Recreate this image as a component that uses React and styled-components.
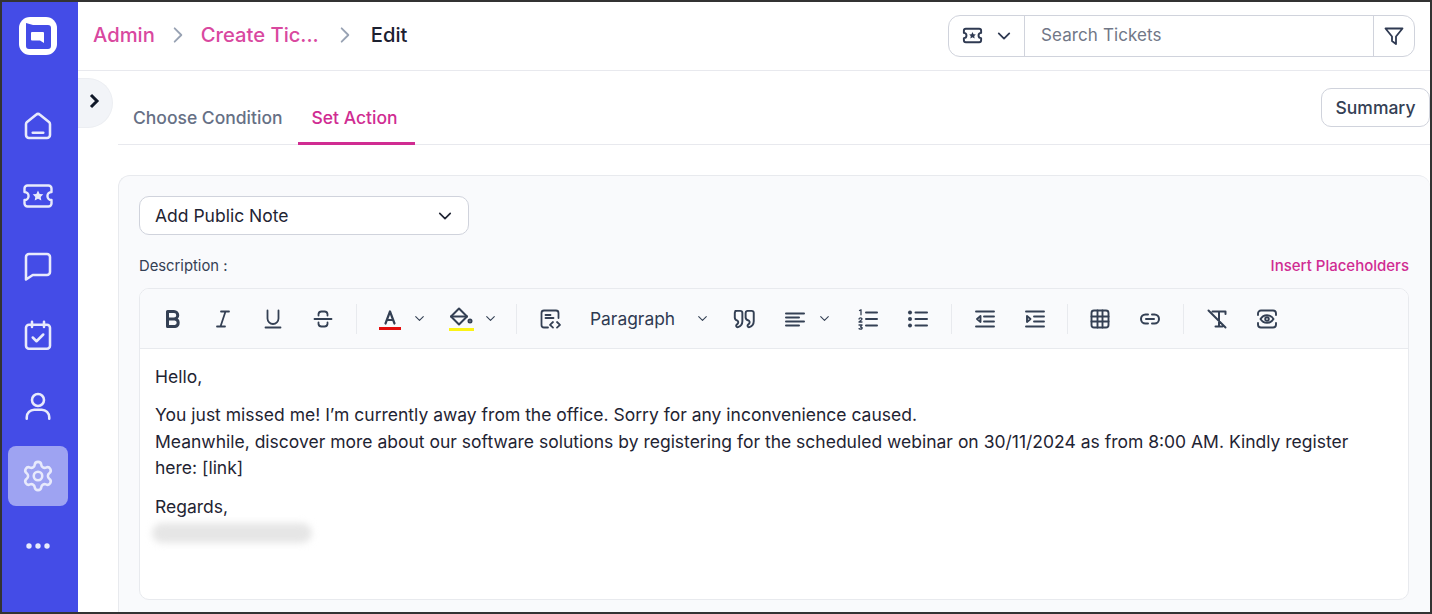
import styled, { createGlobalStyle } from "styled-components";
import { Settings } from "lucide-react";

const GlobalStyle = createGlobalStyle`
  html, body {
    margin: 0;
    padding: 0;
    background: #fff;
  }
  * {
    box-sizing: border-box;
  }
  body {
    font-family: Inter, "Noto Sans", "Liberation Sans", sans-serif;
    color: #1f2433;
  }
`;

const Frame = styled.div`
  width: 1432px;
  height: 614px;
  display: flex;
  overflow: hidden;
  border: 2px solid #333;
  background: #fff;
`;

const Sidebar = styled.nav`
  width: 76px;
  flex: none;
  background: #444ce7;
  display: flex;
  flex-direction: column;
  align-items: center;
  padding: 14px 4px 0 0;
`;

const Logo = styled.svg`
  width: 40px;
  height: 40px;
  margin-bottom: 40px;
`;

const NavItem = styled.div`
  width: 60px;
  height: 60px;
  margin-bottom: 10px;
  border-radius: 8px;
  display: flex;
  align-items: center;
  justify-content: center;
  color: #e8eafc;
  background: ${(p) => (p.$active ? "#9ea3f2" : "transparent")};
`;

const Main = styled.div`
  flex: 1;
  min-width: 0;
  position: relative;
  display: flex;
  flex-direction: column;
`;

const Header = styled.header`
  height: 69px;
  flex: none;
  display: flex;
  align-items: center;
  justify-content: space-between;
  padding: 0 15px;
  border-bottom: 1px solid #e8e9ee;
`;

const Crumbs = styled.div`
  display: flex;
  align-items: center;
  font-size: 20.2px;
  margin-top: -3px;
`;

const Crumb = styled.span`
  color: ${(p) => (p.$current ? "#1c2130" : "#d9489f")};
  font-weight: 500;
`;

const CrumbArrow = styled.svg`
  width: 20px;
  height: 20px;
  margin: 0 ${(p) => p.$space || 13}px;
  color: #98a2b3;
`;

const SearchBar = styled.div`
  width: 467px;
  height: 42px;
  margin-top: -1px;
  display: flex;
  align-items: stretch;
  border: 1px solid #d0d3dc;
  border-radius: 12px;
`;

const SearchType = styled.div`
  width: 76px;
  display: flex;
  align-items: center;
  justify-content: center;
  gap: 11px;
  color: #2f3a52;
  border-right: 1px solid #d0d3dc;
`;

const SearchInput = styled.div`
  flex: 1;
  display: flex;
  align-items: center;
  padding-left: 16px;
  padding-bottom: 1px;
  font-size: 17px;
  color: #717787;
  letter-spacing: 0.1px;
`;

const FilterBox = styled.div`
  width: 41px;
  display: flex;
  align-items: center;
  justify-content: center;
  color: #2f3a52;
  border-left: 1px solid #d0d3dc;
`;

const Collapse = styled.div`
  position: absolute;
  left: 0;
  top: 76px;
  width: 35px;
  height: 50px;
  border-radius: 0 25px 25px 0;
  background: #f2f4f8;
  border: 1px solid #eceef2;
  border-left: none;
  display: flex;
  align-items: center;
  padding: 0 0 4px 10px;
  color: #101828;
`;

const TabRow = styled.div`
  height: 74px;
  flex: none;
  margin-left: 40px;
  display: flex;
  justify-content: space-between;
  border-bottom: 1px solid #e8e9ee;
`;

const Tabs = styled.div`
  display: flex;
  align-items: flex-end;
`;

const Tab = styled.div`
  height: 56px;
  margin-bottom: -1px;
  padding: 18px ${(p) => (p.$active ? 17 : 15)}px 0 ${(p) => (p.$active ? 14 : 15)}px;
  font-size: 17.5px;
  font-weight: 500;
  color: ${(p) => (p.$active ? "#d02c92" : "#667085")};
  border-bottom: 3px solid ${(p) => (p.$active ? "#d02c92" : "transparent")};
`;

const SummaryButton = styled.div`
  width: 109px;
  height: 39px;
  margin-top: 17px;
  display: flex;
  align-items: center;
  justify-content: center;
  font-size: 17.5px;
  font-weight: 500;
  color: #344054;
  background: #fff;
  border: 1px solid #d0d3dc;
  border-radius: 10px;
`;

const Card = styled.section`
  flex: 1;
  margin: 30px 0 0 40px;
  padding: 20px 21px 0 20px;
  background: #f9fafc;
  border: 1px solid #e8eaee;
  border-bottom: none;
  border-right: none;
  border-radius: 12px 12px 0 0;
  min-height: 0;
`;

const Select = styled.div`
  width: 330px;
  height: 39px;
  display: flex;
  align-items: center;
  justify-content: space-between;
  padding: 0 14px 0 15px;
  font-size: 17.5px;
  color: #1f2433;
  background: #fff;
  border: 1px solid #d0d3dc;
  border-radius: 10px;
`;

const LabelRow = styled.div`
  height: 53px;
  display: flex;
  align-items: center;
  justify-content: space-between;
  padding-top: 8px;
  font-size: 14.8px;
  color: #344054;
`;

const PlaceholderLink = styled.span`
  font-size: 15px;
  font-weight: 500;
  color: #d02c92;
`;

const Editor = styled.div`
  height: 312px;
  display: flex;
  flex-direction: column;
  border: 1px solid #e8eaee;
  border-radius: 10px;
  overflow: hidden;
  background: #fff;
`;

const Toolbar = styled.div`
  height: 60px;
  flex: none;
  display: flex;
  align-items: center;
  padding-left: 8px;
  background: #f9fafc;
  border-bottom: 1px solid #e8eaee;
  color: #344054;
`;

const ToolButton = styled.div`
  width: 50px;
  height: 30px;
  flex: none;
  margin-left: ${(p) => p.$offset || 0}px;
  display: flex;
  align-items: center;
  justify-content: center;
`;

const Caret = styled.div`
  width: 20px;
  height: 20px;
  flex: none;
  margin-left: -6px;
  margin-right: ${(p) => p.$after || 0}px;
  display: flex;
  align-items: center;
  justify-content: center;
`;

const Separator = styled.div`
  width: 1px;
  height: 30px;
  flex: none;
  margin: 0 ${(p) => p.$space || 8}px;
  background: #e8eaee;
`;

const FormatName = styled.span`
  width: 108px;
  flex: none;
  margin-left: 15px;
  font-size: 17.4px;
  color: #2f3a52;
`;

const Body = styled.div`
  flex: 1;
  padding: 14.5px 30px 15px 15px;
  font-size: 17.5px;
  line-height: 26.5px;
  color: #1f2433;
`;

const Para = styled.p`
  margin: 0 0 ${(p) => (p.$last ? 0 : 12)}px;
`;

const BlurredName = styled.div`
  width: 160px;
  height: 20px;
  margin: 3px 0 0 -3px;
  border-radius: 10px;
  background: #e6e6e6;
  filter: blur(3.5px);
`;

const Chevron = ({ size = 14, width = 2 }) => (
  <svg width={size} height={size} viewBox="0 0 24 24" fill="none" stroke="currentColor" strokeWidth={width} strokeLinecap="round" strokeLinejoin="round">
    <path d="M5 8.5l7 7 7-7" />
  </svg>
);

const Icon = ({ size = 24, sw = 2, children }) => (
  <svg width={size} height={size} viewBox="0 0 24 24" fill="none" stroke="currentColor" strokeWidth={sw} strokeLinecap="round" strokeLinejoin="round">
    {children}
  </svg>
);

const TICKET = "M5 5h14a2 2 0 0 1 2 2v2.3a2.7 2.7 0 0 0 0 5.4V17a2 2 0 0 1-2 2H5a2 2 0 0 1-2-2v-2.3a2.7 2.7 0 0 0 0-5.4V7a2 2 0 0 1 2-2z";
const STAR = "M12 8.4l1.1 2.2 2.4.3-1.7 1.7.4 2.4-2.2-1.1-2.2 1.1.4-2.4-1.7-1.7 2.4-.3z";

const navIcons = [
  <Icon size={36} sw={1.7} key="home">
    <path d="M4 10.8c0-.6.3-1.1.7-1.5l6-4.8a2 2 0 0 1 2.6 0l6 4.8c.4.4.7.9.7 1.5V18a2 2 0 0 1-2 2H6a2 2 0 0 1-2-2z" />
    <path d="M8.5 16.5h7" />
  </Icon>,
  <Icon size={36} sw={1.6} key="ticket">
    <path d={TICKET} />
    <path d={STAR} fill="currentColor" stroke="none" />
  </Icon>,
  <Icon size={36} sw={1.7} key="chat">
    <path d="M6 4h12a2 2 0 0 1 2 2v10a2 2 0 0 1-2 2H8.5L4 21V6a2 2 0 0 1 2-2z" />
  </Icon>,
  <Icon size={36} sw={1.7} key="calendar">
    <rect x="4" y="4.5" width="16" height="16" rx="2" />
    <path d="M8 2.5v3.5M16 2.5v3.5M8.5 13l2.5 2.500 4.500-4.500" />
  </Icon>,
  <Icon size={36} sw={1.7} key="person">
    <circle cx="12" cy="8" r="4" />
    <path d="M4.5 20.5v-1a5 5 0 0 1 5-5h5a5 5 0 0 1 5 5v1" />
  </Icon>,
  <Settings size={34} strokeWidth={1.8} key="settings" />,
  <Icon size={36} sw={0} key="more">
    <g fill="currentColor">
      <circle cx="6" cy="12" r="1.8" />
      <circle cx="12" cy="12" r="1.8" />
      <circle cx="18" cy="12" r="1.8" />
    </g>
  </Icon>,
];

const App = () => {
  return (
    <>
      <GlobalStyle />
      <Frame>
        <Sidebar>
          <Logo viewBox="0 0 40 40">
            <rect x="1" y="1" width="38" height="38" rx="11" fill="#fff" />
            <path d="M8 7 15 9h15a3 3 0 0 1 3 3v18a3 3 0 0 1-3 3H11a3 3 0 0 1-3-3z" fill="#444ce7" />
            <path d="M14 16h11a1 1 0 0 1 1 1v10l-4-2.500h-8a1 1 0 0 1-1-1v-6.500a1 1 0 0 1 1-1z" fill="#fff" />
          </Logo>
          {navIcons.map((icon, i) => (
            <NavItem key={i} $active={i === 5}>
              {icon}
            </NavItem>
          ))}
        </Sidebar>
        <Main>
          <Header>
            <Crumbs>
              <Crumb>Admin</Crumb>
              <CrumbArrow viewBox="0 0 24 24" fill="none" stroke="currentColor" strokeWidth="2.2" strokeLinecap="round" strokeLinejoin="round">
                <path d="M8 4l8 8-8 8" />
              </CrumbArrow>
              <Crumb>Create Tic...</Crumb>
              <CrumbArrow $space={16} viewBox="0 0 24 24" fill="none" stroke="currentColor" strokeWidth="2.2" strokeLinecap="round" strokeLinejoin="round">
                <path d="M8 4l8 8-8 8" />
              </CrumbArrow>
              <Crumb $current>Edit</Crumb>
            </Crumbs>
            <SearchBar>
              <SearchType>
                <Icon size={23} sw={2}>
                  <path d={TICKET} />
                  <path d={STAR} fill="currentColor" stroke="none" />
                </Icon>
                <Chevron size={18} width={2.4} />
              </SearchType>
              <SearchInput>Search Tickets</SearchInput>
              <FilterBox>
                <Icon size={24} sw={1.8}>
                  <path d="M3.5 4.5h17l-6.5 8v7.5l-4-3v-4.5z" />
                </Icon>
              </FilterBox>
            </SearchBar>
          </Header>
          <Collapse>
            <svg width="14" height="16" viewBox="0 0 14 16" fill="none" stroke="currentColor" strokeWidth="3" strokeLinejoin="miter">
              <path d="M3 2l6 6-6 6" />
            </svg>
          </Collapse>
          <TabRow>
            <Tabs>
              <Tab>Choose Condition</Tab>
              <Tab $active>Set Action</Tab>
            </Tabs>
            <SummaryButton>Summary</SummaryButton>
          </TabRow>
          <Card>
            <Select>
              Add Public Note
              <Chevron size={18} width={2.2} />
            </Select>
            <LabelRow>
              <span>Description :</span>
              <PlaceholderLink>Insert Placeholders</PlaceholderLink>
            </LabelRow>
            <Editor>
              <Toolbar>
                <ToolButton>
                  <Icon sw={3}>
                    <path d="M6.5 4.5h6.5a3.7 3.7 0 0 1 0 7.5H6.5zM6.5 12h7.5a3.8 3.8 0 0 1 0 7.5H6.5z" />
                  </Icon>
                </ToolButton>
                <ToolButton>
                  <Icon sw={1.8}>
                    <path d="M10 4.5h8M6 19.5h8M14.5 4.5l-5 15" />
                  </Icon>
                </ToolButton>
                <ToolButton>
                  <Icon sw={1.8}>
                    <path d="M6.5 3.5v8a5.5 5.5 0 0 0 11 0v-8M4.5 20.5h15" />
                  </Icon>
                </ToolButton>
                <ToolButton>
                  <Icon sw={1.8}>
                    <path d="M3.5 12h17M16.5 8.5V7a3 3 0 0 0-3-2.5h-3A3 3 0 0 0 7.5 7v1.5M7.5 15.5V17a3 3 0 0 0 3 2.5h3a3 3 0 0 0 3-2.5v-1.5" />
                  </Icon>
                </ToolButton>
                <Separator />
                <ToolButton>
                  <Icon sw={2.2}>
                    <path d="M7.5 16.5 12 4.5l4.5 12M9 13h6" />
                    <rect x="1" y="20" width="22" height="3" fill="#e30d0d" stroke="none" />
                  </Icon>
                </ToolButton>
                <Caret>
                  <Chevron size={13} />
                </Caret>
                <ToolButton $offset={7}>
                  <svg width="26" height="26" viewBox="0 0 26 26" fill="none" stroke="currentColor" strokeWidth="2" strokeLinejoin="round" strokeLinecap="round">
                    <path d="M11 2.5l8 8-8 8-8-8z" />
                    <path d="M3 10.5h16" />
                    <circle cx="22" cy="15" r="1.5" />
                    <rect x="1" y="22" width="25" height="3" fill="#fbf315" stroke="none" />
                  </svg>
                </ToolButton>
                <Caret $after={8}>
                  <Chevron size={13} />
                </Caret>
                <Separator />
                <ToolButton>
                  <Icon sw={1.8}>
                    <path d="M20.5 11V6a2.5 2.5 0 0 0-2.5-2.5H6A2.5 2.5 0 0 0 3.5 6v12A2.5 2.5 0 0 0 6 20.5h4M7.5 8h5M7.5 11h8M15 15l-3 2.8 3 2.8M19 15l3 2.8-3 2.8" />
                  </Icon>
                </ToolButton>
                <FormatName>Paragraph</FormatName>
                <Caret $after={7}>
                  <Chevron size={13} />
                </Caret>
                <ToolButton>
                  <Icon size={26} sw={1.8}>
                    <path d="M4 4.5h4.5a2 2 0 0 1 2 2v7.5a6 6 0 0 1-4 5.5c-1.500.3-2.500-1.500-1-2.500 1.500-1 1.500-2.500.5-3.500-1.500-.5-2.500-1-2.500-3V6.500a2 2 0 0 1 2-2z" />
                    <path d="M15 4.5h4a2 2 0 0 1 2 2v7.500a6 6 0 0 1-4 5.500c-1.500.3-2.500-1.500-1-2.500 1.500-1 1.500-2.500.5-3.500-1.500-.5-3-1-3-3V6.500a2 2 0 0 1 1.500-2z" />
                  </Icon>
                </ToolButton>
                <ToolButton $offset={1}>
                  <Icon sw={2}>
                    <path d="M3 6.5h18M3 10.5h13M3 14.5h18M3 18.5h13" />
                  </Icon>
                </ToolButton>
                <Caret $after={9}>
                  <Chevron size={13} />
                </Caret>
                <ToolButton>
                  <Icon sw={2}>
                    <path d="M10 5.5h11M10 12h11M10 18.5h11" />
                    <path d="M3.5 3.5 5 2.8v5M3 12c.3-1.500 3-1.500 3 0 0 1-2 2-3 3h3M3 18h3l-1.500 2c1.500 0 2 .8 1.500 1.500-.5.7-2 .7-3 .2" strokeWidth="1.3" />
                  </Icon>
                </ToolButton>
                <ToolButton>
                  <Icon sw={2}>
                    <path d="M9.5 5.5h11.5M9.5 12h11.5M9.500 18.500h11.500" />
                    <g fill="currentColor" stroke="none">
                      <circle cx="4" cy="5.5" r="2" />
                      <circle cx="4" cy="12" r="2" />
                      <circle cx="4" cy="18.5" r="2" />
                    </g>
                  </Icon>
                </ToolButton>
                <Separator />
                <ToolButton>
                  <Icon sw={1.9}>
                    <path d="M3 4.5h18M11 9.5h10M11 14.5h10M3 19.5h18M7.5 9l-3.5 3 3.5 3z" />
                  </Icon>
                </ToolButton>
                <ToolButton>
                  <Icon sw={1.9}>
                    <path d="M3 4.5h18M11 9.5h10M11 14.5h10M3 19.5h18M4 9l3.5 3-3.5 3z" />
                  </Icon>
                </ToolButton>
                <Separator $space={7} />
                <ToolButton>
                  <Icon sw={1.9}>
                    <rect x="3.5" y="3.5" width="17" height="17" rx="2.5" />
                    <path d="M3.5 9.5h17M3.5 14.5h17M9.5 3.5v17M14.5 3.5v17" />
                  </Icon>
                </ToolButton>
                <ToolButton>
                  <Icon sw={2}>
                    <path d="M10 7.5H7.5a4.5 4.5 0 0 0 0 9H10M14 7.5h2.5a4.5 4.5 0 0 1 0 9H14M8 12h8" />
                  </Icon>
                </ToolButton>
                <Separator />
                <ToolButton>
                  <Icon sw={2}>
                    <path d="M3.5 3.5l17 17M7.5 4.5h13v2.5M14 4.5v15M10.5 19.5h7" />
                  </Icon>
                </ToolButton>
                <ToolButton>
                  <Icon sw={1.9}>
                    <path d="M3 8V6.5A3 3 0 0 1 6 3.500h12a3 3 0 0 1 3 3V8M3 16v1.500a3 3 0 0 0 3 3h12a3 3 0 0 0 3-3V16" />
                    <path d="M5.5 12c1.500-2.500 4-3.800 6.500-3.800s5 1.300 6.500 3.800c-1.500 2.500-4 3.800-6.500 3.800s-5-1.300-6.500-3.800z" />
                    <circle cx="12" cy="12" r="1.8" />
                  </Icon>
                </ToolButton>
              </Toolbar>
              <Body>
                <Para>Hello,</Para>
                <Para>
                  You just missed me! I’m currently away from the office. Sorry for any inconvenience caused.
                  <br />
                  Meanwhile, discover more about our software solutions by registering for the scheduled webinar on 30/11/2024 as from 8:00 AM. Kindly register here: [link]
                </Para>
                <Para $last>Regards,</Para>
                <BlurredName />
              </Body>
            </Editor>
          </Card>
        </Main>
      </Frame>
    </>
  );
};

export default App;
